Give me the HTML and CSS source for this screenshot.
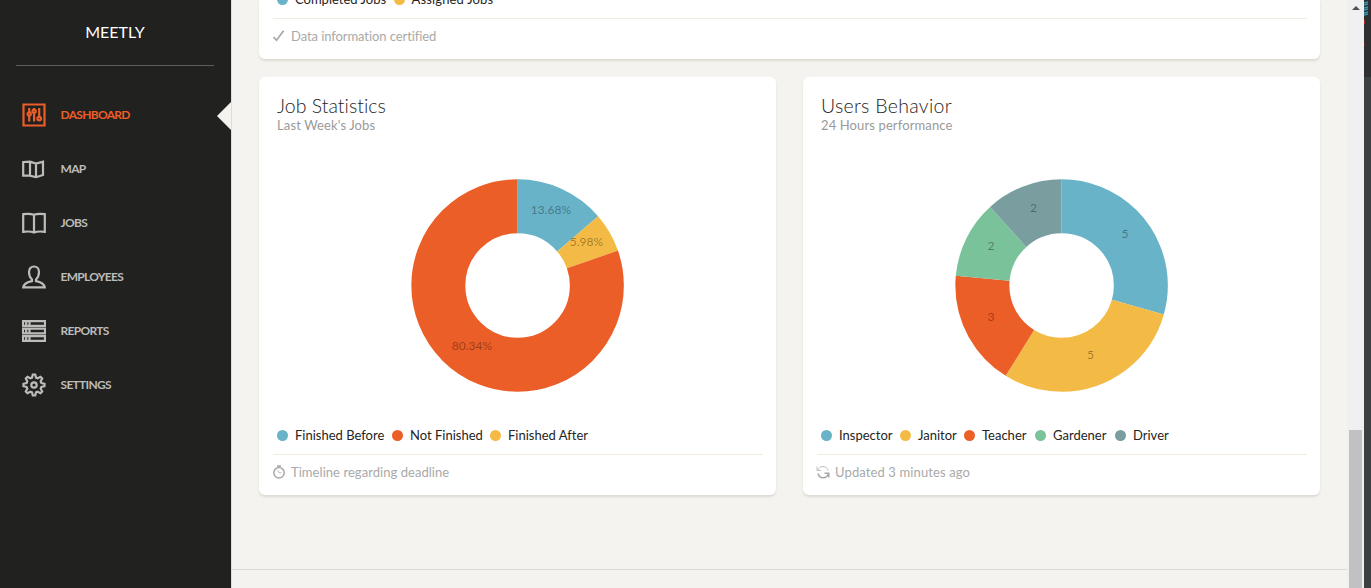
FILE: index.html
```html
<!DOCTYPE html>
<html lang="en">
<head>
<meta charset="utf-8">
<title>Meetly</title>
<link rel="stylesheet" href="styles.css">
</head>
<body>
<div class="app">
  <aside class="sidebar">
    <div class="brand">MEETLY</div>
    <nav class="nav">
      <a class="nav-item active">
        <svg class="nav-icon" viewBox="0 0 24 24"><path d="M1.500 1.500h21v21h-21z"/><path d="M7.200 5v4M7.200 13v5.500M12.100 5v1M12.100 10.500v8M17.200 5v8.500"/><circle cx="7.200" cy="11" r="1.600"/><circle cx="12.100" cy="8.200" r="1.600"/><circle cx="17.200" cy="15.600" r="1.800"/></svg>
        <span class="nav-label">DASHBOARD</span>
      </a>
      <a class="nav-item">
        <svg class="nav-icon" viewBox="0 0 24 24"><path d="M1.200 5l6.800-.4 6 2 7-2V18l-7 2.200-6-1.600H1.200zM8 4.600v14M14 6.600v13.600"/></svg>
        <span class="nav-label">MAP</span>
      </a>
      <a class="nav-item">
        <svg class="nav-icon" viewBox="0 0 24 24"><path d="M1.200 3.200C5 2.600 9 2.600 12 3.800c3-1.200 7-1.200 10.800-.6v17.600c-3.800-.5-7.800-.5-10.800.8-3-1.300-7-1.300-10.800-.8zM12 3.800v17.500"/></svg>
        <span class="nav-label">JOBS</span>
      </a>
      <a class="nav-item">
        <svg class="nav-icon" viewBox="0 0 24 24"><path d="M10 14.500C7.900 12.500 7 9.500 7 7c0-3.300 2-5.500 5-5.500S17 3.700 17 7c0 2.500-.9 5.500-3 7.500v1.600c4 .7 8 2.400 8.700 6.200H1.300c.7-3.800 4.700-5.500 8.700-6.200z"/></svg>
        <span class="nav-label">EMPLOYEES</span>
      </a>
      <a class="nav-item">
        <svg class="nav-icon" viewBox="0 0 24 24"><path d="M1 2.200h22v4.600H1zM1 9.700h22v4.600H1zM1 17.200h22v4.600H1zM7.500 2v5M7.500 9.500v5M7.500 17v5M4.200 2v5M4.200 9.500v5M4.200 17v5"/></svg>
        <span class="nav-label">REPORTS</span>
      </a>
      <a class="nav-item">
        <svg class="nav-icon" viewBox="0 0 24 24"><path d="M10.800 1.500h2.400l.8 3.100 1.700.7 2.800-1.500 1.700 1.700-1.500 2.800.7 1.700 3.100.8v2.400l-3.100.8-.7 1.700 1.500 2.800-1.700 1.700-2.800-1.500-1.700.7-.8 3.100h-2.400l-.8-3.100-1.700-.7-2.800 1.500-1.700-1.700 1.500-2.800-.7-1.700-3.100-.8v-2.400l3.100-.8.7-1.700-1.500-2.800 1.700-1.700 2.800 1.500 1.700-.7z"/><circle cx="12" cy="12" r="2.700"/></svg>
        <span class="nav-label">SETTINGS</span>
      </a>
    </nav>
  </aside>

  <main class="main">
    <section class="card card-wide">
      <div class="legend">
        <span class="legend-item completed"><i class="dot blue"></i>Completed Jobs</span>
        <span class="legend-item assigned"><i class="dot yellow"></i>Assigned Jobs</span>
      </div>
      <div class="card-footer"><svg class="foot-icon" viewBox="0 0 14 14"><path class="thick" d="M1.500 8.200l3 3L11.600 1.800"/></svg><span class="foot-text certified">Data information certified</span></div>
    </section>

    <div class="row">
      <section class="card">
        <h4 class="title">Job Statistics</h4>
        <p class="subtitle">Last Week's Jobs</p>
        <svg class="chart" viewBox="0 0 481 245">
          <g class="ring" transform="rotate(-90 240.600 122.500)">
            <circle class="s-blue" cx="240.600" cy="122.500" r="79.250" pathLength="100" stroke-dasharray="13.680 100"/>
            <circle class="s-yellow" cx="240.600" cy="122.500" r="79.250" pathLength="100" stroke-dasharray="5.980 100" stroke-dashoffset="-13.680"/>
            <circle class="s-red" cx="240.600" cy="122.500" r="79.250" pathLength="100" stroke-dasharray="80.340 100" stroke-dashoffset="-19.660"/>
          </g>
          <g class="labels"><text x="274" y="51">13.68%</text><text x="309.500" y="83">5.98%</text><text x="195" y="187">80.34%</text></g>
        </svg>
        <div class="legend">
          <span class="legend-item before"><i class="dot blue"></i>Finished Before</span>
          <span class="legend-item not"><i class="dot red"></i>Not Finished</span>
          <span class="legend-item"><i class="dot yellow"></i>Finished After</span>
        </div>
        <div class="card-footer"><svg class="foot-icon" viewBox="0 0 14 14"><circle cx="7" cy="7.800" r="5.200"/><path d="M5 .9h4M7 1v2"/><path class="faint" d="M5.500 5.500L7 7.800h2.500"/></svg><span class="foot-text timeline">Timeline regarding deadline</span></div>
      </section>

      <section class="card">
        <h4 class="title users">Users Behavior</h4>
        <p class="subtitle">24 Hours performance</p>
        <svg class="chart" viewBox="0 0 481 245">
          <g class="ring" transform="rotate(-90 240.600 122.500)">
            <circle class="s-blue" cx="240.600" cy="122.500" r="79.250" pathLength="17" stroke-dasharray="5 17"/>
            <circle class="s-yellow" cx="240.600" cy="122.500" r="79.250" pathLength="17" stroke-dasharray="5 17" stroke-dashoffset="-5"/>
            <circle class="s-red" cx="240.600" cy="122.500" r="79.250" pathLength="17" stroke-dasharray="3 17" stroke-dashoffset="-10"/>
            <circle class="s-green" cx="240.600" cy="122.500" r="79.250" pathLength="17" stroke-dasharray="2 17" stroke-dashoffset="-13"/>
            <circle class="s-gray" cx="240.600" cy="122.500" r="79.250" pathLength="17" stroke-dasharray="2 17" stroke-dashoffset="-15"/>
          </g>
          <g class="labels"><text x="304" y="75">5</text><text x="269.500" y="196">5</text><text x="170" y="158">3</text><text x="170" y="87">2</text><text x="212.500" y="49">2</text></g>
        </svg>
        <div class="legend">
          <span class="legend-item inspector"><i class="dot blue"></i>Inspector</span>
          <span class="legend-item janitor"><i class="dot yellow"></i>Janitor</span>
          <span class="legend-item teacher"><i class="dot red"></i>Teacher</span>
          <span class="legend-item gardener"><i class="dot green"></i>Gardener</span>
          <span class="legend-item"><i class="dot gray"></i>Driver</span>
        </div>
        <div class="card-footer"><svg class="foot-icon" viewBox="0 0 14 14"><path d="M2 8.500c.6 2.700 2.600 4.200 5 4.200 2.500 0 4.500-1.500 5.200-3.700M8.500 8.300h4.300v4.300"/><path class="faint" d="M12 5.500C11.300 3 9.500 1.500 7 1.500S2.800 2.800 2 5M1 1.500V5.500h4"/></svg><span class="foot-text updated">Updated 3 minutes ago</span></div>
      </section>
    </div>
    <footer class="page-footer"></footer>
  </main>

  <div class="scrollbar"><i class="arrow-up"></i><i class="thumb"></i></div>
  <div class="edge">
    <svg class="edge-marks" viewBox="0 0 7 50"><path class="teal" d="M0 3l4-1M0 5l4-1M0 8l4-1M0 10l4-1M0 13l4-1M0 15l4-1"/><path class="crimson" d="M.5 20v4M0 44.500h1"/></svg>
  </div>
</div>
</body>
</html>
```

FILE: styles.css
```css
* { box-sizing: border-box; }
body { margin: 0; font-family: Muli, Lato, sans-serif; font-size: 14px; color: #252422; font-variant-ligatures: none; }
.app { display: flex; width: 1371px; height: 588px; overflow: hidden; background: #f4f3ef; }
.sidebar { width: 232px; flex: none; background: #212120; border-right: 1px solid #ddd; padding: 0 17px 0 16px; }
.brand { height: 66px; border-bottom: 1px solid #5c5c5a; color: #fff; font-size: 16px; line-height: 64px; text-align: center; }
.nav { padding-top: 22px; }
.nav-item { display: flex; align-items: center; height: 54px; padding-left: 6px; position: relative; color: #bcbcba; }
.nav-icon { width: 24px; height: 24px; margin-right: 14.5px; fill: none; stroke: currentColor; stroke-width: 2.2; }
.nav-label { font-size: 12px; font-weight: 700; letter-spacing: -.7px; line-height: 16px; padding-bottom: 1px; }
.active { color: #eb5e28; }
.active::after { content: ""; position: absolute; right: -17px; top: 14px; border: 14px solid transparent; border-left: 0; border-right-color: #f4f3ef; }
.main { width: 1115px; flex: none; padding: 0 27px; display: flex; flex-direction: column; }
.card { background: #fff; border-radius: 6px; box-shadow: 0 2px 2px rgba(204, 197, 185, .5); padding: 0 13px 0 14px; height: 418px; width: 517px; }
.card-wide { width: 1061px; height: 59px; border-radius: 0 0 6px 6px; flex: none; }
.card-wide .legend { height: 18px; padding-top: 0; padding-bottom: 10px; align-items: flex-end; }
.row { display: flex; gap: 27px; margin-top: 18px; }
.title { margin: 0; padding: 17px 4px 0; font-size: 19.5px; font-weight: 300; line-height: 24px; letter-spacing: .03px; }
.users { letter-spacing: .3px; }
.subtitle { margin: 0; padding: 0 4px; font-size: 13px; line-height: 15px; color: #9a9a9a; letter-spacing: .12px; }
.chart { display: block; width: 481px; height: 245px; margin: 30px 4px 0; }
.ring { fill: none; stroke-width: 54; }
.s-blue { stroke: #68b3c8; }
.s-yellow { stroke: #f3bb45; }
.s-red { stroke: #eb5e28; }
.s-green { stroke: #7ac29a; }
.s-gray { stroke: #7a9e9f; }
.labels { font-size: 12px; text-anchor: middle; fill: rgba(0, 0, 0, .35); }
.legend { display: flex; align-items: center; height: 46px; padding: 8px 0 0 4px; font-size: 13px; white-space: nowrap; line-height: 18px; }
.legend-item { display: flex; align-items: center; }
.dot { width: 11px; height: 11px; border-radius: 50%; margin-right: 7px; flex: none; }
.completed { width: 116.500px; }
.assigned { letter-spacing: .15px; }
.before { width: 115px; }
.not { width: 98px; }
.inspector { width: 79px; }
.janitor { width: 64px; }
.teacher { width: 71px; }
.gardener { width: 80px; }
.blue { background: #68b3c8; }
.yellow { background: #f3bb45; }
.red { background: #eb5e28; }
.green { background: #7ac29a; }
.gray { background: #7a9e9f; }
.card-footer { display: flex; align-items: center; height: 36px; padding-bottom: 2px; border-top: 1px solid #f1eae0; color: #a9a9a9; font-size: 13px; }
.foot-icon { width: 14px; height: 14px; margin: 0 5px 0 -1px; fill: none; stroke: currentColor; stroke-width: 1.5; }
.thick { stroke-width: 1.8; }
.faint { stroke-width: 1; opacity: .75; }
.certified { letter-spacing: -.08px; }
.timeline { letter-spacing: .05px; }
.updated { letter-spacing: .12px; }
.page-footer { height: 19px; margin: 74px -27px 0; border-top: 1px solid #ddddd8; }
.scrollbar { width: 17px; flex: none; background: #f0f0f0; padding: 6px 2px 0; display: flex; flex-direction: column; align-items: center; }
.arrow-up { border: 4px solid transparent; border-top: 0; border-bottom-color: #505050; }
.thumb { width: 13px; height: 158px; margin-top: 420px; background: #c1c1c1; flex: none; }
.edge { width: 7px; background: linear-gradient(#2e2f31 77px, #3b4043 77px); }
.edge-marks { display: block; width: 7px; height: 50px; fill: none; stroke-width: 1.3; }
.teal { stroke: #3796b0; }
.crimson { stroke: #a02c2c; }
```
